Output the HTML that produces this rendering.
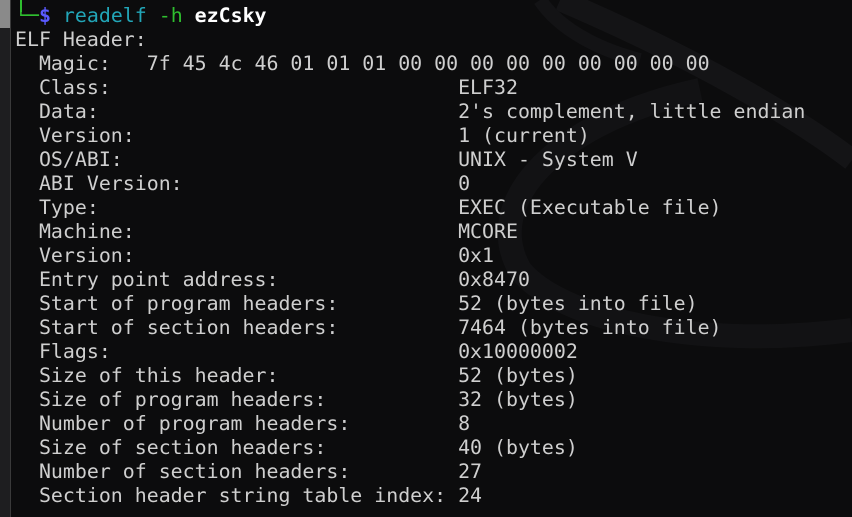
<!DOCTYPE html>
<html><head><meta charset="utf-8"><style>
html,body{margin:0;padding:0;width:852px;height:517px;overflow:hidden;background:#0c0c0d;}
.sb{position:absolute;left:0;top:0;width:10px;height:517px;background:#1e1e20;border-right:1px solid #3a3a3a;}
.sb i{position:absolute;left:0;top:0;width:10px;height:28px;background:#8a8a8a;}
.bg{position:absolute;left:0;top:0}
pre{position:absolute;left:15px;top:4px;margin:0;font-family:"DejaVu Sans Mono","Liberation Mono",monospace;font-size:19.9px;line-height:24px;color:#cfcfcf;}
.g{color:#2fbf2f}.b{color:#5a5aff;font-weight:bold}.c{color:#22a6b8}.w{color:#fff;font-weight:bold}
.tl{position:absolute;left:20px;top:0;width:10px;height:12px;border-left:2px solid #2fbf2f;}
</style></head><body>
<svg class="bg" width="852" height="517">
<path d="M560 0 C700 60 800 120 852 160" stroke="#141416" stroke-width="22" fill="none"/>
<path d="M852 330 C700 350 560 320 520 270 C480 200 560 120 700 90" stroke="#121214" stroke-width="24" fill="none"/>
<path d="M540 0 C560 30 600 50 640 60" stroke="#131315" stroke-width="14" fill="none"/>
</svg>
<div class="sb"><i></i></div>
<div class="tl"></div>
<pre><span class="g">└─</span><span class="b">$</span> <span class="c">readelf</span> <span class="g">-h</span> <span class="w">ezCsky</span>
ELF Header:
  Magic:   7f 45 4c 46 01 01 01 00 00 00 00 00 00 00 00 00
  Class:                             ELF32
  Data:                              2's complement, little endian
  Version:                           1 (current)
  OS/ABI:                            UNIX - System V
  ABI Version:                       0
  Type:                              EXEC (Executable file)
  Machine:                           MCORE
  Version:                           0x1
  Entry point address:               0x8470
  Start of program headers:          52 (bytes into file)
  Start of section headers:          7464 (bytes into file)
  Flags:                             0x10000002
  Size of this header:               52 (bytes)
  Size of program headers:           32 (bytes)
  Number of program headers:         8
  Size of section headers:           40 (bytes)
  Number of section headers:         27
  Section header string table index: 24</pre>
</body></html>
